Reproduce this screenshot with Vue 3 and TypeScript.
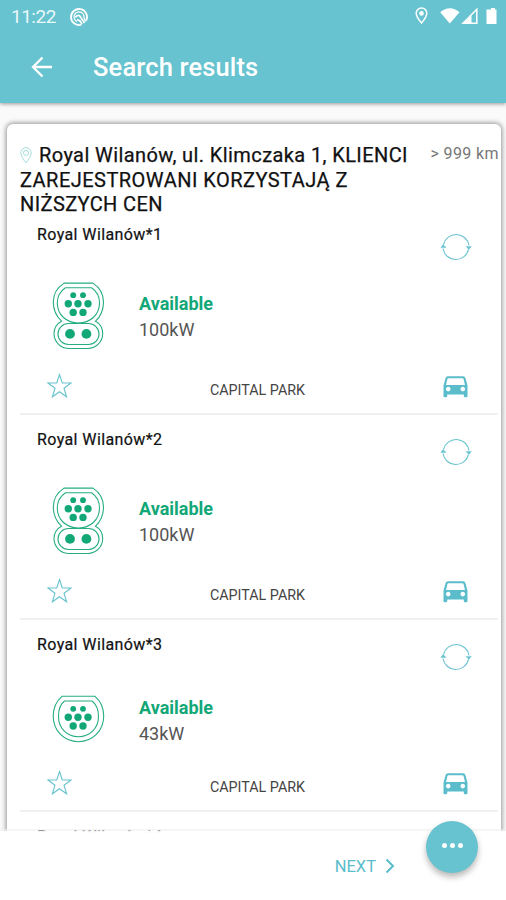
<script setup lang="ts">
interface Charger {
  name: string
  power: string
  combo: boolean
}

const chargers: Charger[] = [
  { name: 'Royal Wilanów*1', power: '100kW', combo: true },
  { name: 'Royal Wilanów*2', power: '100kW', combo: true },
  { name: 'Royal Wilanów*3', power: '43kW', combo: false },
]

const nextCharger = 'Royal Wilanów*4'

const pins: [number, number, number][] = [
  [21.2, 13.2, 2.9],
  [31, 13.2, 2.9],
  [16.3, 21.7, 3.7],
  [26, 21.7, 3.7],
  [36, 21.7, 3.7],
  [21.2, 30.4, 3.7],
  [31, 30.4, 3.7],
]
</script>

<template>
  <div class="screen">
    <header class="topbar">
      <div class="status">
        <span class="clock">11:22</span>
        <svg class="badge" viewBox="0 0 20 20" fill="none" stroke="#fff">
          <path d="M12.500 17.600A8 8 0 1 1 17.200 13.500" stroke-width="1.800" />
          <path d="M8 14.500A5 5 0 1 1 15 10.500Q15 13 17 14.500" stroke-width="1.300" />
          <path d="M6.300 10.500c1.500-3 4.200-2.500 5.200-.500L15.500 16M8 12.500l3 1.500 2 3" stroke-width="1.700" />
        </svg>
        <svg class="signals" viewBox="0 0 84 20">
          <path d="M7.500 1a5.300 5.300 0 0 0-5.300 5.300C2.200 10 7.500 16 7.500 16s5.300-6 5.300-9.700A5.300 5.300 0 0 0 7.500 1Z" fill="none" stroke="#fff" stroke-width="1.500" />
          <circle cx="7.500" cy="6.400" r="2.300" fill="#fff" />
          <path d="M26.200 5.200Q35.800-2.800 45.500 5.200L35.800 16.500Z" fill="#fff" />
          <path d="M62.800 2.300V16.300H49Z" fill="none" stroke="#fff" stroke-width="1.500" />
          <path d="M50 16L57.500 8.500V16Z" fill="#fff" />
          <path d="M75 2.500h2V1h4v1.500h1.500V17H72.500V2.500Z" fill="#fff" />
        </svg>
      </div>
      <div class="titlebar">
        <svg class="back" viewBox="0 0 22 22" fill="none" stroke="#fff" stroke-width="2.300">
          <path d="M21 11H2M11.500 1.500L2 11l9.500 9.500" />
        </svg>
        <h1>Search results</h1>
      </div>
    </header>

    <main class="content">
      <section class="card">
        <div class="place">
          <h2>
            <svg class="pin" viewBox="0 0 12 17" fill="none" stroke="#8dd5d0" stroke-width=".8">
              <path d="M6 .7A5.200 5.200 0 0 0 .8 5.900C.8 9.500 6 16 6 16s5.200-6.500 5.200-10.100A5.200 5.200 0 0 0 6 .7Z" />
              <circle cx="6" cy="5.900" r="2.500" />
            </svg><span>Royal Wilanów, ul. Klimczaka 1, KLIENCI</span><br />
            <span class="wide">ZAREJESTROWANI KORZYSTAJĄ Z</span><br />
            <span>NIŻSZYCH CEN</span>
          </h2>
          <span class="distance">&gt; 999 km</span>
        </div>

        <article v-for="charger in chargers" :key="charger.name" class="charger">
          <div class="head">
            <h3>{{ charger.name }}</h3>
            <svg class="refresh" viewBox="0 0 32 30" fill="none" stroke="#68c3cf" stroke-width="1.100">
              <path d="M3.500 12.500A13 13 0 0 1 29 13.500M28.500 17.500A13 13 0 0 1 3 16.500" />
              <path d="M3 12.500l3.200 3H.800ZM29 17.500l-3-3h5.400Z" fill="#68c3cf" stroke-width=".4" />
            </svg>
          </div>
          <div class="body" :class="{ single: !charger.combo }">
            <svg v-if="charger.combo" class="plug" viewBox="0 0 53 68" fill="none" stroke="#26ad82" stroke-width="1.100">
              <path d="M12 1.100H41C47 5 51.500 12 51.500 20C51.500 29 48 35 43.500 39.200C48 41.500 50.700 46 50.700 52A15 15 0 0 1 36 66.500H17A15 15 0 0 1 2 52C2 46 5 41.500 9.500 39.200C4.500 34.500 1.300 28 1.300 20C1.300 12 6 5 12 1.100Z" />
              <path d="M13.500 5.700H39.500C44.500 9 47.500 14 47.500 21C47.500 33 38 41 26.400 41S5.300 33 5.300 21C5.300 14 8.500 9 13.500 5.700Z" />
              <rect x="6" y="41.500" width="41" height="21" rx="10.500" />
              <g fill="#12a777" stroke="none">
                <circle v-for="(p, i) in pins" :key="i" :cx="p[0]" :cy="p[1]" :r="p[2]" />
                <circle cx="18" cy="51.900" r="4.900" />
                <circle cx="34.400" cy="51.900" r="4.900" />
              </g>
            </svg>
            <svg v-else class="plug small" viewBox="0 0 53 48" fill="none" stroke="#26ad82" stroke-width="1.100">
              <path d="M10 1.300H43C48.500 6 51.700 13 51.700 21C51.700 36 40.500 46.700 26.400 46.700S1.200 36 1.200 21C1.200 13 4.500 6 10 1.300Z" />
              <path d="M12.500 6H40C44 9 46.500 15 46.500 21.500C46.500 33.500 37.500 41.700 26.400 41.700S6.500 33.500 6.500 21.500C6.500 15 8.500 9 12.500 6Z" />
              <g fill="#12a777" stroke="none">
                <circle v-for="(p, i) in pins" :key="i" :cx="p[0]" :cy="p[1] + 0.6" :r="p[2]" />
              </g>
            </svg>
            <div class="info">
              <strong>Available</strong>
              <span>{{ charger.power }}</span>
            </div>
          </div>
          <div class="foot">
            <svg class="star" viewBox="0 0 26 26" fill="none" stroke="#68c3cf" stroke-width="1.100">
              <path d="M13.500 1.500L16.300 10H25L18 15.200L20.600 23.800L13.500 18.700L6.400 23.800L9 15.200L2 10H10.700Z" />
            </svg>
            <span class="operator">CAPITAL PARK</span>
            <svg class="car" viewBox="0 0 25 22">
              <path fill="#5bbdcb" fill-rule="evenodd" d="M5 .3H20Q22 .3 22.500 2.300L24.500 9.500V20Q24.500 21.300 23.300 21.300H22Q20.800 21.300 20.800 20V18.500H4.200V20Q4.200 21.300 3 21.300H1.700Q.5 21.300.5 20V9.500L2.500 2.300Q3 .3 5 .3ZM5.700 2.300Q4.600 2.300 4.400 3.300L3 9H22L20.600 3.300Q20.400 2.300 19.300 2.300ZM5.200 10.800a2.300 2.300 0 1 0 .01 0ZM19.800 10.800a2.300 2.300 0 1 0 .01 0Z" />
            </svg>
          </div>
        </article>
        <div class="head">
          <h3>{{ nextCharger }}</h3>
        </div>
      </section>
    </main>

    <footer class="bottom">
      <button class="next">
        <span>NEXT</span>
        <svg viewBox="0 0 10 16" fill="none" stroke="#5bbdcb" stroke-width="2"><path d="M1.500 1.500L8 8l-6.500 6.500" /></svg>
      </button>
      <button class="fab" aria-label="More"><i></i><i></i><i></i></button>
    </footer>
  </div>
</template>

<style>
body {
  margin: 0;
}
</style>

<style scoped>
.screen {
  width: 506px;
  height: 900px;
  display: flex;
  flex-direction: column;
  overflow: hidden;
  background: #fafafa;
  font-family: Roboto, "Liberation Sans", sans-serif;
  color: #111;
}
h1, h2, h3 {
  margin: 0;
  font-weight: 400;
}
svg {
  display: block;
  flex: none;
}
.topbar {
  flex: none;
  height: 103px;
  background: #67c3cf;
  box-shadow: 0 1px 4px rgba(0, 0, 0, 0.4);
  z-index: 1;
  color: #fff;
}
.status {
  height: 33px;
  display: flex;
  align-items: center;
  padding: 0 8px 0 11px;
}
.clock {
  width: 47px;
  margin-right: 11px;
  font-size: 19px;
  letter-spacing: -0.5px;
  color: #e9f8fa;
}
.badge {
  width: 20px;
  height: 20px;
}
.signals {
  width: 84px;
  height: 20px;
  margin: 1px 0 0 auto;
}
.titlebar {
  display: flex;
  align-items: center;
  height: 68px;
  padding-left: 31px;
}
.back {
  width: 22px;
  height: 22px;
}
h1 {
  margin-left: 40px;
  font-size: 25.5px;
  font-weight: 500;
  letter-spacing: 0.15px;
  white-space: nowrap;
}
.content {
  flex: 1;
  min-height: 0;
  overflow: hidden;
  margin-bottom: -4px;
  padding: 21px 5px 0 7px;
}
.card {
  box-sizing: border-box;
  height: 780px;
  border-radius: 6px;
  background: #fff;
  box-shadow: 0 0 5px 1px rgba(0, 0, 0, 0.42);
  padding: 19px 3px 0 13px;
}
.place {
  height: 67px;
  display: flex;
  justify-content: space-between;
}
h2 {
  font-size: 20px;
  line-height: 24.5px;
  letter-spacing: 0.4px;
  white-space: nowrap;
  -webkit-text-stroke: 0.25px #111;
}
.wide {
  letter-spacing: 0.47px;
}
.pin {
  display: inline-block;
  width: 12px;
  height: 17px;
  margin-right: 7px;
  vertical-align: -2px;
}
.distance {
  font-size: 16px;
  line-height: 21px;
  letter-spacing: 0.4px;
  margin-right: -1px;
  color: #777;
  white-space: nowrap;
}
.charger {
  border-bottom: 2px solid #f0f0f0;
}
.head {
  height: 60px;
  display: flex;
  justify-content: space-between;
  padding: 0 26px 0 17px;
}
h3 {
  font-size: 16px;
  line-height: 20px;
  letter-spacing: 0.4px;
  margin-top: 15px;
  -webkit-text-stroke: 0.2px #111;
}
.refresh {
  width: 32px;
  height: 30px;
  margin-top: 22px;
}
.body {
  height: 91px;
  display: flex;
  align-items: center;
  padding-left: 32px;
}
.body.single {
  height: 78px;
}
.plug {
  width: 53px;
  height: 68px;
}
.plug.small {
  height: 48px;
}
.info {
  display: flex;
  flex-direction: column;
  margin: 3px 0 0 34px;
  font-size: 18px;
  line-height: 26px;
  color: #555;
}
.info strong {
  font-weight: 700;
  color: #12a777;
}
.foot {
  height: 52px;
  display: grid;
  grid-template-columns: 26px 1fr 25px;
  padding: 0 30px 0 26px;
}
.star {
  width: 26px;
  height: 26px;
  margin-top: 12px;
}
.operator {
  margin-top: 19px;
  text-align: center;
  font-size: 14.300px;
  line-height: 20px;
  color: #444;
}
.car {
  width: 25px;
  height: 22px;
  margin-top: 15px;
}
.bottom {
  flex: none;
  height: 71px;
  display: flex;
  justify-content: flex-end;
  background: linear-gradient(rgba(240, 240, 240, 0.6) 2px, rgba(255, 255, 255, 0.9) 2px, #fff 4px);
  z-index: 1;
  padding-right: 28px;
}
button {
  border: 0;
  padding: 0;
  background: none;
  font: inherit;
}
.next {
  height: 24px;
  margin: 25px 31px 0 0;
  display: flex;
  align-items: center;
  gap: 9px;
  color: #5bbdcb;
  font-size: 16.5px;
}
.next svg {
  width: 10px;
  height: 16px;
}
.fab {
  width: 52px;
  height: 52px;
  margin-top: -8px;
  border-radius: 50%;
  background: #67c3cf;
  box-shadow: 0 4px 6px rgba(0, 0, 0, 0.28);
  display: flex;
  align-items: center;
  justify-content: center;
  gap: 3px;
  padding-bottom: 4px;
}
.fab i {
  width: 5px;
  height: 5px;
  border-radius: 50%;
  background: #fff;
}
</style>
